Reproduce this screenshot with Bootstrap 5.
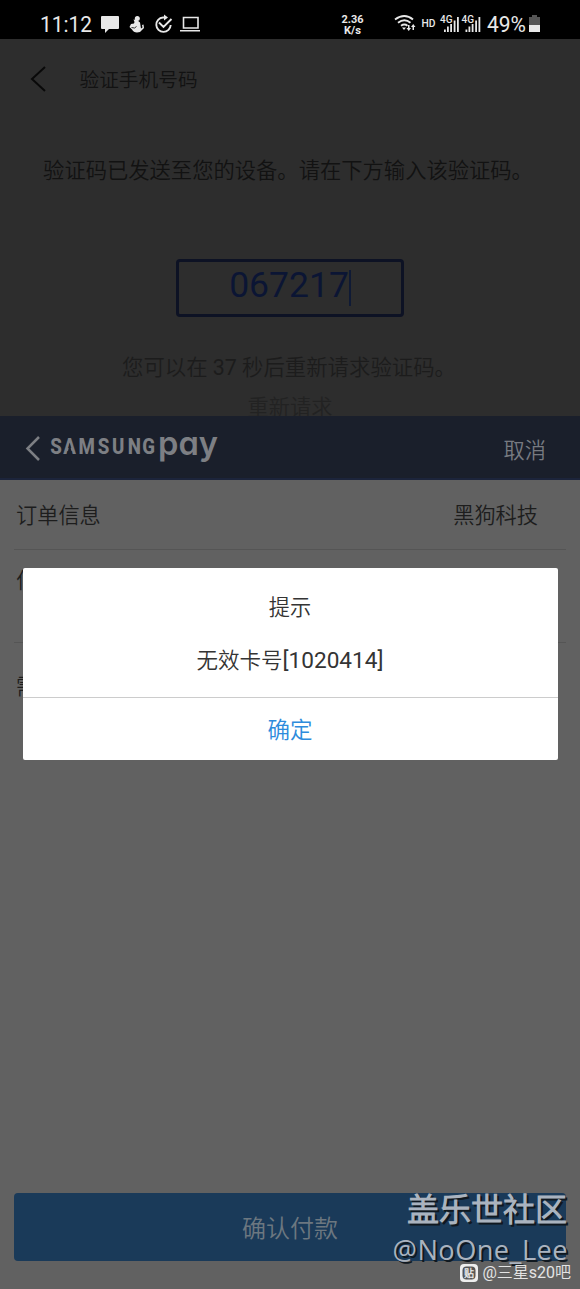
<!DOCTYPE html>
<html lang="zh-CN">
<head>
<meta charset="utf-8">
<meta name="viewport" content="width=device-width, initial-scale=1">
<title>Samsung Pay</title>
<link href="https://cdn.jsdelivr.net/npm/bootstrap@5.3.0/dist/css/bootstrap.min.css" rel="stylesheet">
<style>
body{font-family:Roboto,"Noto Sans CJK SC DemiLight","Noto Sans CJK SC",sans-serif;font-weight:350;background:#616161;color:#1d1d1d;font-size:21.2px;line-height:30px}
.screen{width:580px;height:1289px}
.status{height:39px;background:#000;color:#e8e8e8;font-weight:400}
.verify{height:377px;background:#2d2d2d;color:#121212}
.topline{height:84px;padding-left:30px}
.topline svg{margin-top:-4px}
.code{width:228px;height:58px;border:3px solid #0d1224;border-radius:4px;margin-top:73px;color:#0b1534;font-size:35.5px;line-height:46px;font-weight:400}
.caret{width:2px;height:36px;background:#0f1a35;margin-top:8px}
.digits{font-weight:400}
.paybar{height:64px;background:#1a1f2b;border-bottom:2px solid #1c243b;color:#777a81;padding:3px 34px 0 25px}
.inforow{margin:0 14px;border-bottom:1px solid #555;padding:0 28px 0 2px}
.confirm{height:68px;margin:0 14px 28px;background:#1a3a59;color:#6c7780;font-size:24px;font-weight:350;border-radius:4px}
.dialog{left:22.5px;top:568px;width:535px;height:192px;background:#fff;border-radius:2px;color:#343434}
.dialog-body{height:130px;border-bottom:1px solid #ccc;padding-top:24px}
.stamp{right:7px;bottom:0;color:#aab3bf;white-space:nowrap;font-weight:400}
.stamp-name{font-size:32px;line-height:40px;font-weight:700;text-shadow:2px 2px 0 #101820}
.stamp-user{font-family:"Open Sans","Noto Sans",sans-serif;font-size:27.2px;letter-spacing:.45px;line-height:34px;text-shadow:2px 2px 0 #101820}
.stamp-forum{font-size:16px;line-height:20px;color:#e4e4e4}
</style>
<script src="https://cdn.jsdelivr.net/npm/bootstrap@5.3.0/dist/js/bootstrap.bundle.min.js"></script>
</head>
<body>
<div class="screen position-relative d-flex flex-column overflow-hidden">
  <header class="status flex-shrink-0">
    <svg class="d-block" width="580" height="39" fill="#e8e8e8" font-family="Roboto, sans-serif">
      <text x="40" y="32" font-size="21.5" textLength="52" lengthAdjust="spacingAndGlyphs">11:12</text>
      <path d="M102 16h16q1 0 1 1v11q0 1-1 1h-9l-4 4v-4h-3q-1 0-1-1V17q0-1 1-1z"/>
      <!-- flexing figure notification -->
      <circle cx="137.300" cy="18.500" r="2.500"/>
      <path d="M133.500 19.500l3.500.5 3 2.500.5 3 .5 3 1.500-1-.5-2.500 1.500-.5.500 3.500-2 2q-1.500 2.500-5 2.500-3.500 0-5-3l-2.500-2.500 1.500-3 3-.5.500-1.500z"/>
      <path d="M131.500 27.500l3 .5 2-1.500" fill="none" stroke="#000" stroke-width=".8"/>
      <!-- circular check and laptop -->
      <g fill="none" stroke="#e8e8e8" stroke-width="1.900">
        <path d="M166 17.500h-3a7.200 7.200 0 1 0 7.700 7.500M159 22.500l4.500 4.500 8-8"/>
        <path d="M183.500 17.500h14.500v10.500h-14.500zM180 30.700h20" stroke-width="1.600"/>
        <path d="M395 19.500q9.500-7 18 0M398 22.700q6.500-5 12.500 0M401 25.700q3.500-2.500 6.500 0"/>
      </g>
      <path d="M164 14.500l4 3-4 3zM402 27.500h4l-2 2.500zM406.500 28h1.500v-3h1.500v3h1.500l-2.250 3zM412.500 30v-3h-1.500l2.250-3 2.250 3h-1.500v3z"/>
      <g font-weight="700" text-anchor="middle"><text x="352.500" y="23" font-size="10.500" textLength="22" lengthAdjust="spacingAndGlyphs">2.36</text><text x="352.500" y="33.500" font-size="10" textLength="17" lengthAdjust="spacingAndGlyphs">K/s</text></g>
      <text x="421.500" y="27" font-size="10.500" font-weight="500" textLength="14" lengthAdjust="spacingAndGlyphs">HD</text>
      <text x="440" y="23" font-size="10.500" font-weight="500" textLength="12.500" lengthAdjust="spacingAndGlyphs">4G</text>
      <text x="461.500" y="23" font-size="10.500" font-weight="500" textLength="12.500" lengthAdjust="spacingAndGlyphs">4G</text>
      <path id="bars" d="M444 29.500h1.800V32H444zM447 26.500h1.800V32H447zM450.200 24h1.800v8h-1.800zM453.700 20.500h1.800V32h-1.800zM457 17h1.800v15H457z"/>
      <use href="#bars" x="21.500"/>
      <text x="487" y="32" font-size="21.500" textLength="39" lengthAdjust="spacingAndGlyphs">49%</text>
      <path d="M529 17h3v-2h5v2h3v8h-11z" fill="#555"/><path d="M529 25h11v7h-11z"/>
    </svg>
  </header>

  <section class="verify flex-shrink-0 d-flex flex-column align-items-center overflow-hidden">
    <div class="topline w-100 d-flex align-items-center flex-shrink-0">
      <svg width="17" height="28" fill="none" stroke="#090909" stroke-width="2"><path d="M15 2L2 14l13 12"/></svg>
      <span style="font-size:19.7px;margin-left:32.500px">验证手机号码</span>
    </div>
    <div style="font-size:21.3px;margin-top:33px;margin-right:4px">验证码已发送至您的设备。请在下方输入该验证码。</div>
    <div class="code d-flex justify-content-center flex-shrink-0"><span>067217</span><span class="caret"></span></div>
    <div style="font-size:21.4px;margin-top:36px;margin-right:2px;color:#1c1c1c" class="text-nowrap">您可以在 <span class="digits">37</span> 秒后重新请求验证码。</div>
    <div class="flex-shrink-0" style="margin-top:10px;color:#222">重新请求</div>
  </section>

  <nav class="paybar flex-shrink-0 d-flex align-items-center justify-content-between">
    <svg width="196" height="56" fill="#7d7f84">
      <path d="M14 16L2.500 27.500 14 39" fill="none" stroke="#7d7f84" stroke-width="2.500"/>
      <text transform="scale(.85 1)" x="29.700 45 63 85.500 102.500 120.800 138" y="33" font-family="Roboto, sans-serif" font-weight="800" font-size="22">SAMSUNG</text>
      <path d="M42.300 33.500h4.800L44.700 22z" fill="#1a1f2b"/>
      <text x="133" y="33.500" font-family="Inter, sans-serif" font-weight="600" font-size="33" textLength="60" lengthAdjust="spacingAndGlyphs" style="font-feature-settings:'cv11'">pay</text>
    </svg>
    <span class="pt-1">取消</span>
  </nav>

  <main class="flex-grow-1 d-flex flex-column">
    <div class="inforow d-flex justify-content-between align-items-center" style="height:70px;padding-top:3px"><span>订单信息</span><span>黑狗科技</span></div>
    <div class="inforow" style="height:93px;padding-top:16px">付款方式</div>
    <div class="inforow border-0" style="padding-top:29px">需付款</div>
    <button class="confirm btn mt-auto p-0 pt-1 border-0" type="button">确认付款</button>
  </main>

  <div class="dialog position-absolute text-center" role="dialog">
    <div class="dialog-body">
      <div style="padding-top:1px">提示</div>
      <div style="font-size:21.500px;margin-top:23px">无效卡号<span class="digits" style="font-size:22.600px">[1020414]</span></div>
    </div>
    <div style="color:#2d8bdc;font-size:22.500px;line-height:64px">确定</div>
  </div>

  <div class="stamp position-absolute d-flex flex-column align-items-end">
    <div class="stamp-name" style="margin-right:6px">盖乐世社区</div>
    <div class="stamp-user" style="margin-top:3px;margin-right:5px">@NoOne_Lee</div>
    <div class="stamp-forum d-flex align-items-center" style="margin:-4px 2px 6px 0">
      <svg width="18" height="18" class="me-1"><rect width="18" height="18" rx="4" fill="#eee"/><rect x="2.500" y="2.500" width="13" height="13" rx="4" fill="#555"/><text x="9" y="12.500" font-size="10" font-weight="700" text-anchor="middle" fill="#eee">贴</text></svg>
      <span>@三星s20吧</span>
    </div>
  </div>
</div>
</body>
</html>
